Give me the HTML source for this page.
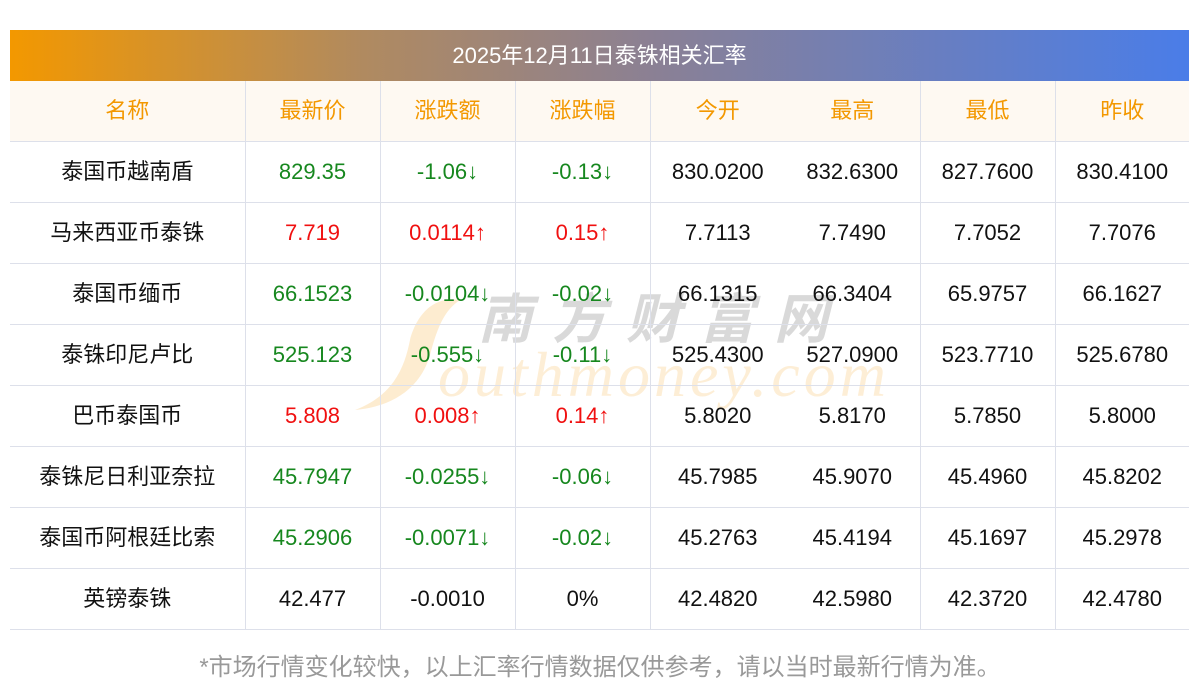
<!DOCTYPE html>
<html><head><meta charset="utf-8"><style>
html,body{margin:0;padding:0;background:#fff;width:1200px;height:697px;overflow:hidden;font-family:"Liberation Sans","Noto Sans CJK SC",sans-serif;}
.title{position:absolute;left:10px;top:30px;width:1179px;height:51px;background:linear-gradient(90deg,#f39800 0%,#b08a60 30%,#8a8095 55%,#4a7de8 100%);color:#fff;font-size:22px;line-height:51px;text-align:center;}
table{position:absolute;left:10px;top:81px;width:1179px;border-collapse:collapse;table-layout:fixed;z-index:2;}
td{height:60px;border-bottom:1px solid #dde0ea;text-align:center;font-size:22px;line-height:26px;color:#111;padding:0;}
tr.h td{background:#fef9f2;color:#f39800;height:60px;}
td.b{border-right:1px solid #dde0ea;}
.g{color:#16871e}.r{color:#f01010}
.wm1{position:absolute;left:478px;top:290px;font-size:54px;color:rgba(170,170,170,0.45);letter-spacing:20px;font-weight:bold;font-style:italic;z-index:1;line-height:60px;}
.wm2{position:absolute;left:438px;top:340px;font-size:64px;color:rgba(250,200,120,0.3);font-style:italic;font-family:"Liberation Serif",serif;letter-spacing:4px;z-index:1;line-height:70px;}
.sw{position:absolute;left:350px;top:295px;z-index:1;}
.foot{position:absolute;left:0;width:1200px;top:647px;text-align:center;font-size:24px;color:#999;}
</style></head><body>
<div class="title">2025年12月11日泰铢相关汇率</div>
<svg class="sw" width="120" height="120" viewBox="0 0 120 120"><path d="M110 5 C80 0 65 25 60 45 C55 70 45 100 5 115 C40 112 70 95 80 60 C88 30 95 15 110 5 Z" fill="rgba(250,200,120,0.35)"/></svg>
<div class="wm1">南方财富网</div>
<div class="wm2">outhmoney.com</div>
<table>
<colgroup><col style="width:235px"><col style="width:135px"><col style="width:135px"><col style="width:135px"><col style="width:135px"><col style="width:135px"><col style="width:135px"><col style="width:134px"></colgroup>
<tr class="h"><td class="b">名称</td><td class="b">最新价</td><td class="b">涨跌额</td><td class="b">涨跌幅</td><td>今开</td><td class="b">最高</td><td class="b">最低</td><td>昨收</td></tr>
<tr><td class="b">泰国币越南盾</td><td class="b g">829.35</td><td class="b g">-1.06↓</td><td class="b g">-0.13↓</td><td>830.0200</td><td class="b">832.6300</td><td class="b">827.7600</td><td>830.4100</td></tr>
<tr><td class="b">马来西亚币泰铢</td><td class="b r">7.719</td><td class="b r">0.0114↑</td><td class="b r">0.15↑</td><td>7.7113</td><td class="b">7.7490</td><td class="b">7.7052</td><td>7.7076</td></tr>
<tr><td class="b">泰国币缅币</td><td class="b g">66.1523</td><td class="b g">-0.0104↓</td><td class="b g">-0.02↓</td><td>66.1315</td><td class="b">66.3404</td><td class="b">65.9757</td><td>66.1627</td></tr>
<tr><td class="b">泰铢印尼卢比</td><td class="b g">525.123</td><td class="b g">-0.555↓</td><td class="b g">-0.11↓</td><td>525.4300</td><td class="b">527.0900</td><td class="b">523.7710</td><td>525.6780</td></tr>
<tr><td class="b">巴币泰国币</td><td class="b r">5.808</td><td class="b r">0.008↑</td><td class="b r">0.14↑</td><td>5.8020</td><td class="b">5.8170</td><td class="b">5.7850</td><td>5.8000</td></tr>
<tr><td class="b">泰铢尼日利亚奈拉</td><td class="b g">45.7947</td><td class="b g">-0.0255↓</td><td class="b g">-0.06↓</td><td>45.7985</td><td class="b">45.9070</td><td class="b">45.4960</td><td>45.8202</td></tr>
<tr><td class="b">泰国币阿根廷比索</td><td class="b g">45.2906</td><td class="b g">-0.0071↓</td><td class="b g">-0.02↓</td><td>45.2763</td><td class="b">45.4194</td><td class="b">45.1697</td><td>45.2978</td></tr>
<tr><td class="b">英镑泰铢</td><td class="b">42.477</td><td class="b">-0.0010</td><td class="b">0%</td><td>42.4820</td><td class="b">42.5980</td><td class="b">42.3720</td><td>42.4780</td></tr>
</table>
<div class="foot">*市场行情变化较快，以上汇率行情数据仅供参考，请以当时最新行情为准。</div>
</body></html>
